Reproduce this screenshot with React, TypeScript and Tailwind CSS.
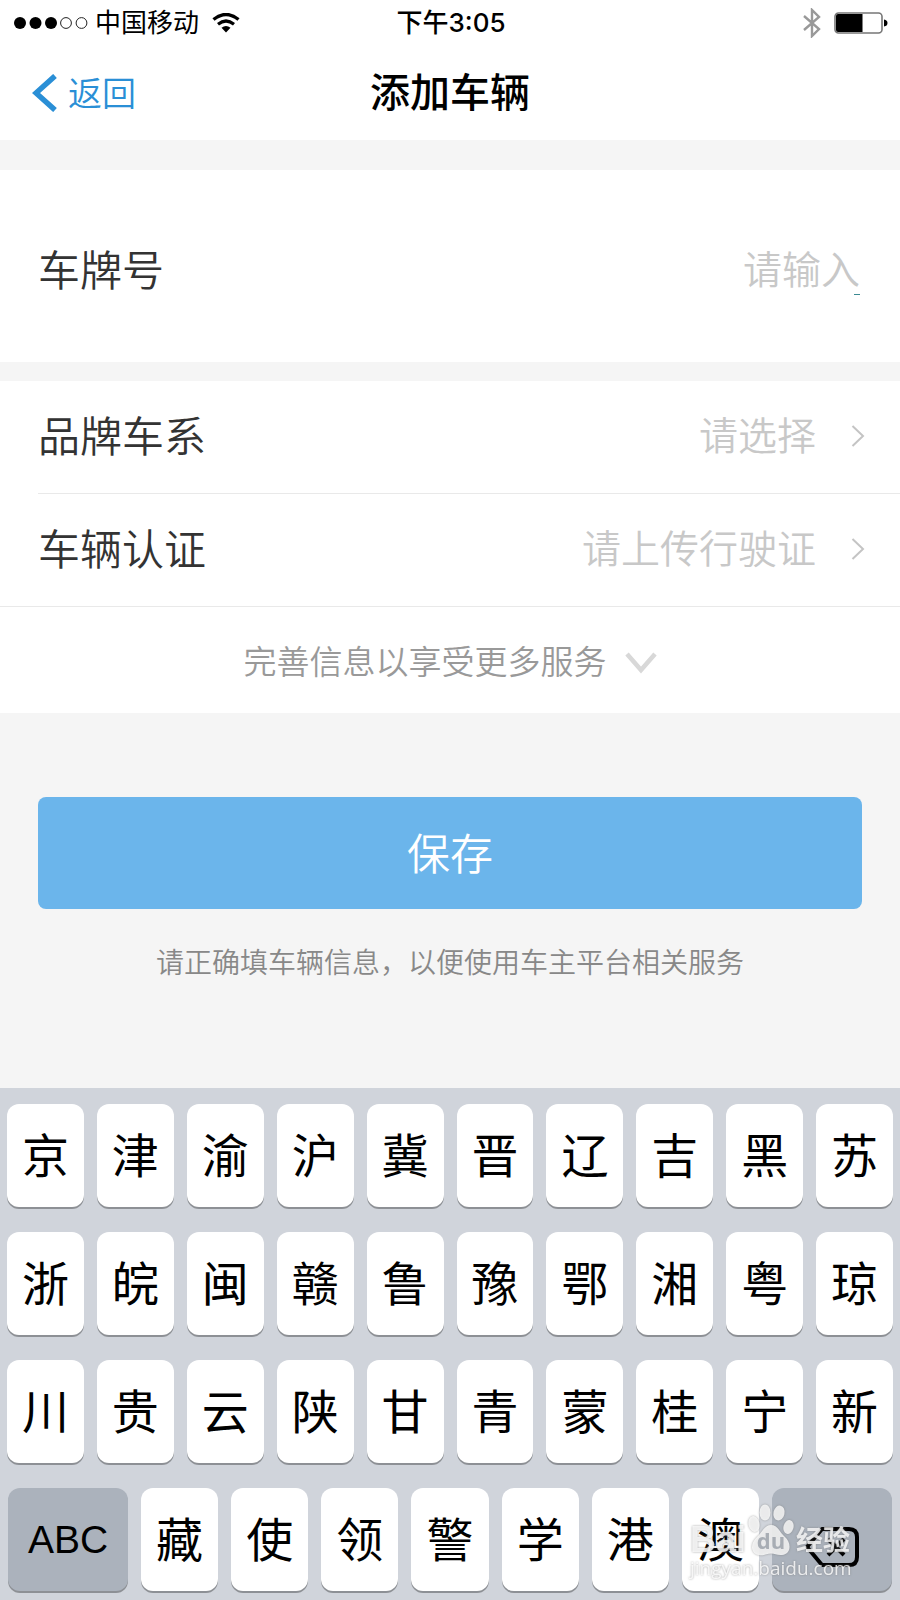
import React from "react";

const keyRows = ["京津渝沪冀晋辽吉黑苏", "浙皖闽赣鲁豫鄂湘粤琼", "川贵云陕甘青蒙桂宁新"];
const lastRow = "藏使领警学港澳";

function StatusBar() {
  return (
    <div className="grid h-[46px] grid-cols-3 items-center pr-3 pl-3.5 text-[26px] leading-11 text-black">
      <div className="flex items-center gap-[7px]">
        <svg width="74" height="14" viewBox="0 0 74 14">
          <circle cx="6" cy="7" r="6" />
          <circle cx="21.5" cy="7" r="6" />
          <circle cx="37" cy="7" r="6" />
          <circle cx="52" cy="7" r="5.4" fill="none" stroke="#222" />
          <circle cx="67.5" cy="7" r="5.4" fill="none" stroke="#222" />
        </svg>
        <span>中国移动</span>
        <svg className="ml-1.5" width="28" height="20" viewBox="0 0 28 20" fill="none" stroke="#000">
          <path d="M1.5 6.5Q14 -3.5 26.5 6.5" strokeWidth="3.4" />
          <path d="M6 11.2Q14 4.8 22 11.2" strokeWidth="3.2" />
          <path d="M9.5 14.8Q14 11.2 18.5 14.8L14 19.5Z" fill="#000" stroke="none" />
        </svg>
      </div>
      <div className="text-center font-medium">下午3:05</div>
      <div className="flex items-center justify-end gap-3">
        <svg width="20" height="30" viewBox="0 0 20 30" fill="none" stroke="#999" strokeWidth="2.4">
          <path d="M2 8L17 21L10 28V2L17 9L2 22" />
        </svg>
        <svg width="54" height="24" viewBox="0 0 54 24">
          <rect x="1" y="2" width="47" height="20" rx="3.5" fill="#fff" stroke="#777" strokeWidth="1.6" />
          <path d="M4 3H28.5V21H4Q2 21 2 19V5Q2 3 4 3Z" />
          <path d="M50 8.5Q53.5 9 53.5 12T50 15.5Z" />
        </svg>
      </div>
    </div>
  );
}

function ArrowRight() {
  return (
    <svg width="14" height="24" viewBox="0 0 14 24" fill="none" stroke="#c4c4c4" strokeWidth="2">
      <path d="M1.5 2L12 12L1.5 22" />
    </svg>
  );
}

function PickerRow({ label, hint }: { label: string; hint: string }) {
  return (
    <button type="button" className="flex h-28 w-full items-center pr-[35px] pb-0.5 text-left">
      <span className="flex-1 text-[42px] font-[350] text-[#333]">{label}</span>
      <span className="mr-[35px] text-[39px] font-[350] text-[#c8c8c8]">{hint}</span>
      <ArrowRight />
    </button>
  );
}

function Key({ children }: { children: React.ReactNode }) {
  return (
    <button
      type="button"
      className="h-[103px] min-w-0 flex-1 rounded-xl bg-white text-[47px] leading-none text-black shadow-[0_2px_0_#8d9095]"
    >
      {children}
    </button>
  );
}

function Watermark() {
  return (
    <div className="pointer-events-none absolute right-[50px] bottom-5 w-40 font-['Open_Sans','Noto_Sans_CJK_SC',sans-serif] text-white/80 drop-shadow-[0_0_1px_#777c]">
      <div className="flex items-end justify-between">
        <span className="font-['Liberation_Sans'] text-[36px] leading-8 font-bold">Bai</span>
        <svg width="46" height="52" viewBox="0 0 46 52" fill="#fff" fillOpacity="0.8">
          <ellipse cx="6" cy="20" rx="5.5" ry="8" transform="rotate(-12 6 20)" />
          <ellipse cx="17" cy="8.5" rx="5.5" ry="8" />
          <ellipse cx="31" cy="9" rx="5.5" ry="7.5" transform="rotate(12 31 9)" />
          <ellipse cx="40.5" cy="23" rx="5" ry="7" transform="rotate(15 40.5 23)" />
          <path d="M23 21C30 21 32 29 37 33C43 38 44 50 34 51C29 51.5 27 49.5 23 49.5S16 52 11 51C1 49 3 38 9 33C14 29 16 21 23 21Z" />
          <text x="23" y="45" fontSize="22" fontWeight="700" textAnchor="middle" fill="#999fa8">
            du
          </text>
        </svg>
        <span className="text-[27px] leading-8 font-bold">经验</span>
      </div>
      <div className="text-[19px] leading-6">jingyan.baidu.com</div>
    </div>
  );
}

function Keyboard() {
  return (
    <div className="relative flex flex-col gap-[25px] bg-[#d0d4db] pt-4 pb-[9px]">
      {keyRows.map((row) => (
        <div key={row} className="flex gap-[13px] px-[7px]">
          {row.split("").map((char) => (
            <Key key={char}>{char}</Key>
          ))}
        </div>
      ))}
      <div className="flex gap-[13px] px-2">
        <button
          type="button"
          className="w-[120px] rounded-xl bg-[#abb2bc] pt-0.5 font-['Liberation_Sans'] text-[39px] text-black shadow-[0_2px_0_#8d9095]"
        >
          ABC
        </button>
        {lastRow.split("").map((char) => (
          <Key key={char}>{char}</Key>
        ))}
        <button
          type="button"
          aria-label="删除"
          className="flex w-[120px] items-center justify-center rounded-xl bg-[#abb2bc] pt-3.5 shadow-[0_2px_0_#8d9095]"
        >
          <svg width="54" height="40" viewBox="0 0 54 40" fill="none" stroke="#000" strokeWidth="4">
            <path d="M17 2H44Q52 2 52 10V30Q52 38 44 38H17L2 20Z" strokeLinejoin="round" />
            <path d="M23 12L39 28M39 12L23 28" />
          </svg>
        </button>
      </div>
      <Watermark />
    </div>
  );
}

export default function App() {
  return (
    <div className="flex min-h-screen flex-col bg-[#f5f5f5] font-['Inter','Noto_Sans_CJK_SC',sans-serif]">
      <header className="bg-white">
        <StatusBar />
        <div className="grid h-[94px] grid-cols-3 items-center px-8">
          <button type="button" className="flex items-center gap-2.5 text-[34px] font-[350] text-[#2a8fd6]">
            <svg width="26" height="38" viewBox="0 0 26 38" fill="none" stroke="#2a8fd6" strokeWidth="5.5">
              <path d="M23 2L4 19L23 36" />
            </svg>
            返回
          </button>
          <h1 className="text-center text-[40px] font-medium text-black">添加车辆</h1>
        </div>
      </header>

      <main className="flex-1">
        <div className="mt-[30px] flex h-48 items-center bg-white pt-2 pr-10 pl-[38px]">
          <label htmlFor="plate" className="text-[42px] font-[350] text-[#333]">
            车牌号
          </label>
          <div className="relative min-w-0 flex-1">
            <input
              id="plate"
              placeholder="请输入"
              className="w-full text-right text-[39px] font-[350] text-[#333] outline-none placeholder:text-[#c8c8c8]"
            />
            <span className="absolute right-0 bottom-1 h-px w-1.5 bg-[#3b8a92]" />
          </div>
        </div>

        <div className="mt-[19px] bg-white">
          <div className="pl-[38px]">
            <PickerRow label="品牌车系" hint="请选择" />
            <div className="h-px bg-[#e9e9e9]" />
            <PickerRow label="车辆认证" hint="请上传行驶证" />
          </div>
          <button
            type="button"
            className="flex h-[107px] w-full items-center justify-center gap-[18px] border-t border-[#e9e9e9] pt-1.5 text-[33px] font-[350] text-[#999]"
          >
            完善信息以享受更多服务
            <svg width="32" height="22" viewBox="0 0 32 22" fill="none" stroke="#d8d8d8" strokeWidth="4.5">
              <path d="M2 2L16 18L30 2" />
            </svg>
          </button>
        </div>

        <div className="px-[38px] pt-[84px] text-center">
          <button type="button" className="h-28 w-full rounded-lg bg-[#6bb5eb] pt-0.5 text-[43px] font-[350] text-white">
            保存
          </button>
          <p className="mt-8 text-[28px] leading-11 font-[350] text-[#888]">
            请正确填车辆信息，以便使用车主平台相关服务
          </p>
        </div>
      </main>

      <Keyboard />
    </div>
  );
}
